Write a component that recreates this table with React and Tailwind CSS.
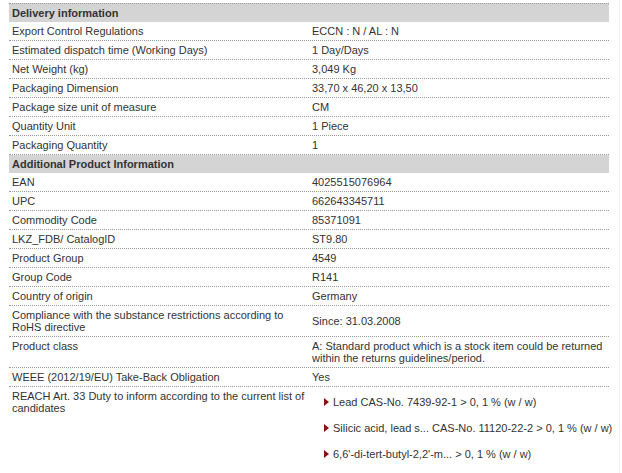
import React from 'react'

const delivery = [
  ['Export Control Regulations', 'ECCN : N / AL : N'],
  ['Estimated dispatch time (Working Days)', '1 Day/Days'],
  ['Net Weight (kg)', '3,049 Kg'],
  ['Packaging Dimension', '33,70 x 46,20 x 13,50'],
  ['Package size unit of measure', 'CM'],
  ['Quantity Unit', '1 Piece'],
  ['Packaging Quantity', '1'],
]

const additional = [
  ['EAN', '4025515076964'],
  ['UPC', '662643345711'],
  ['Commodity Code', '85371091'],
  ['LKZ_FDB/ CatalogID', 'ST9.80'],
  ['Product Group', '4549'],
  ['Group Code', 'R141'],
  ['Country of origin', 'Germany'],
]

const reach = [
  'Lead CAS-No. 7439-92-1 > 0, 1 % (w / w)',
  'Silicic acid, lead s... CAS-No. 11120-22-2 > 0, 1 % (w / w)',
  "6,6'-di-tert-butyl-2,2'-m... > 0, 1 % (w / w)",
]

function Header({ title, top }) {
  return (
    <div className={`bg-[#d4d4d4] px-[3px] pt-[3px] font-bold leading-[12px] text-[#333] ${top ? 'h-[19px] border-t border-dotted border-[#9a9a9a]' : 'h-[18px]'}`}>
      {title}
    </div>
  )
}

function Row({ label, children, valueClass = '' }) {
  return (
    <div className="flex items-start border-b border-dotted border-[#9a9a9a]">
      <div className="w-[300px] shrink-0 px-[3px] py-[3px] leading-[12px]">{label}</div>
      <div className={`flex-1 px-[3px] py-[3px] leading-[12px] ${valueClass}`}>{children}</div>
    </div>
  )
}

export default function App() {
  return (
    <div className="relative h-[473px] w-[622px] overflow-hidden bg-white font-['Liberation_Sans',Arial,sans-serif] text-[11px] text-[#333]">
      <div className="absolute right-[2px] top-0 h-full w-px bg-[#f1f1f1]" />
      <div className="ml-[9px] w-[600px] pt-[3px]">
        <Header title="Delivery information" top />
        {delivery.map(([l, v]) => (
          <Row key={l} label={l}>{v}</Row>
        ))}
        <Header title="Additional Product Information" />
        {additional.map(([l, v]) => (
          <Row key={l} label={l}>{v}</Row>
        ))}
        <Row label="Compliance with the substance restrictions according to RoHS directive" valueClass="pt-[9px]">
          Since: 31.03.2008
        </Row>
        <Row label="Product class">
          A: Standard product which is a stock item could be returned within the returns guidelines/period.
        </Row>
        <Row label="WEEE (2012/19/EU) Take-Back Obligation">Yes</Row>
        <div className="flex items-start">
          <div className="w-[300px] shrink-0 px-[3px] py-[3px] leading-[12px]">
            REACH Art. 33 Duty to inform according to the current list of candidates
          </div>
          <ul className="flex-1 pl-[15px] pt-[9px]">
            {reach.map((r) => (
              <li key={r} className="mb-[14px] flex items-center whitespace-nowrap leading-[12px]">
                <span className="mr-[4px] inline-block h-0 w-0 shrink-0 border-y-[4px] border-l-[5px] border-y-transparent border-l-[#8b1111]" />
                {r}
              </li>
            ))}
          </ul>
        </div>
      </div>
    </div>
  )
}
